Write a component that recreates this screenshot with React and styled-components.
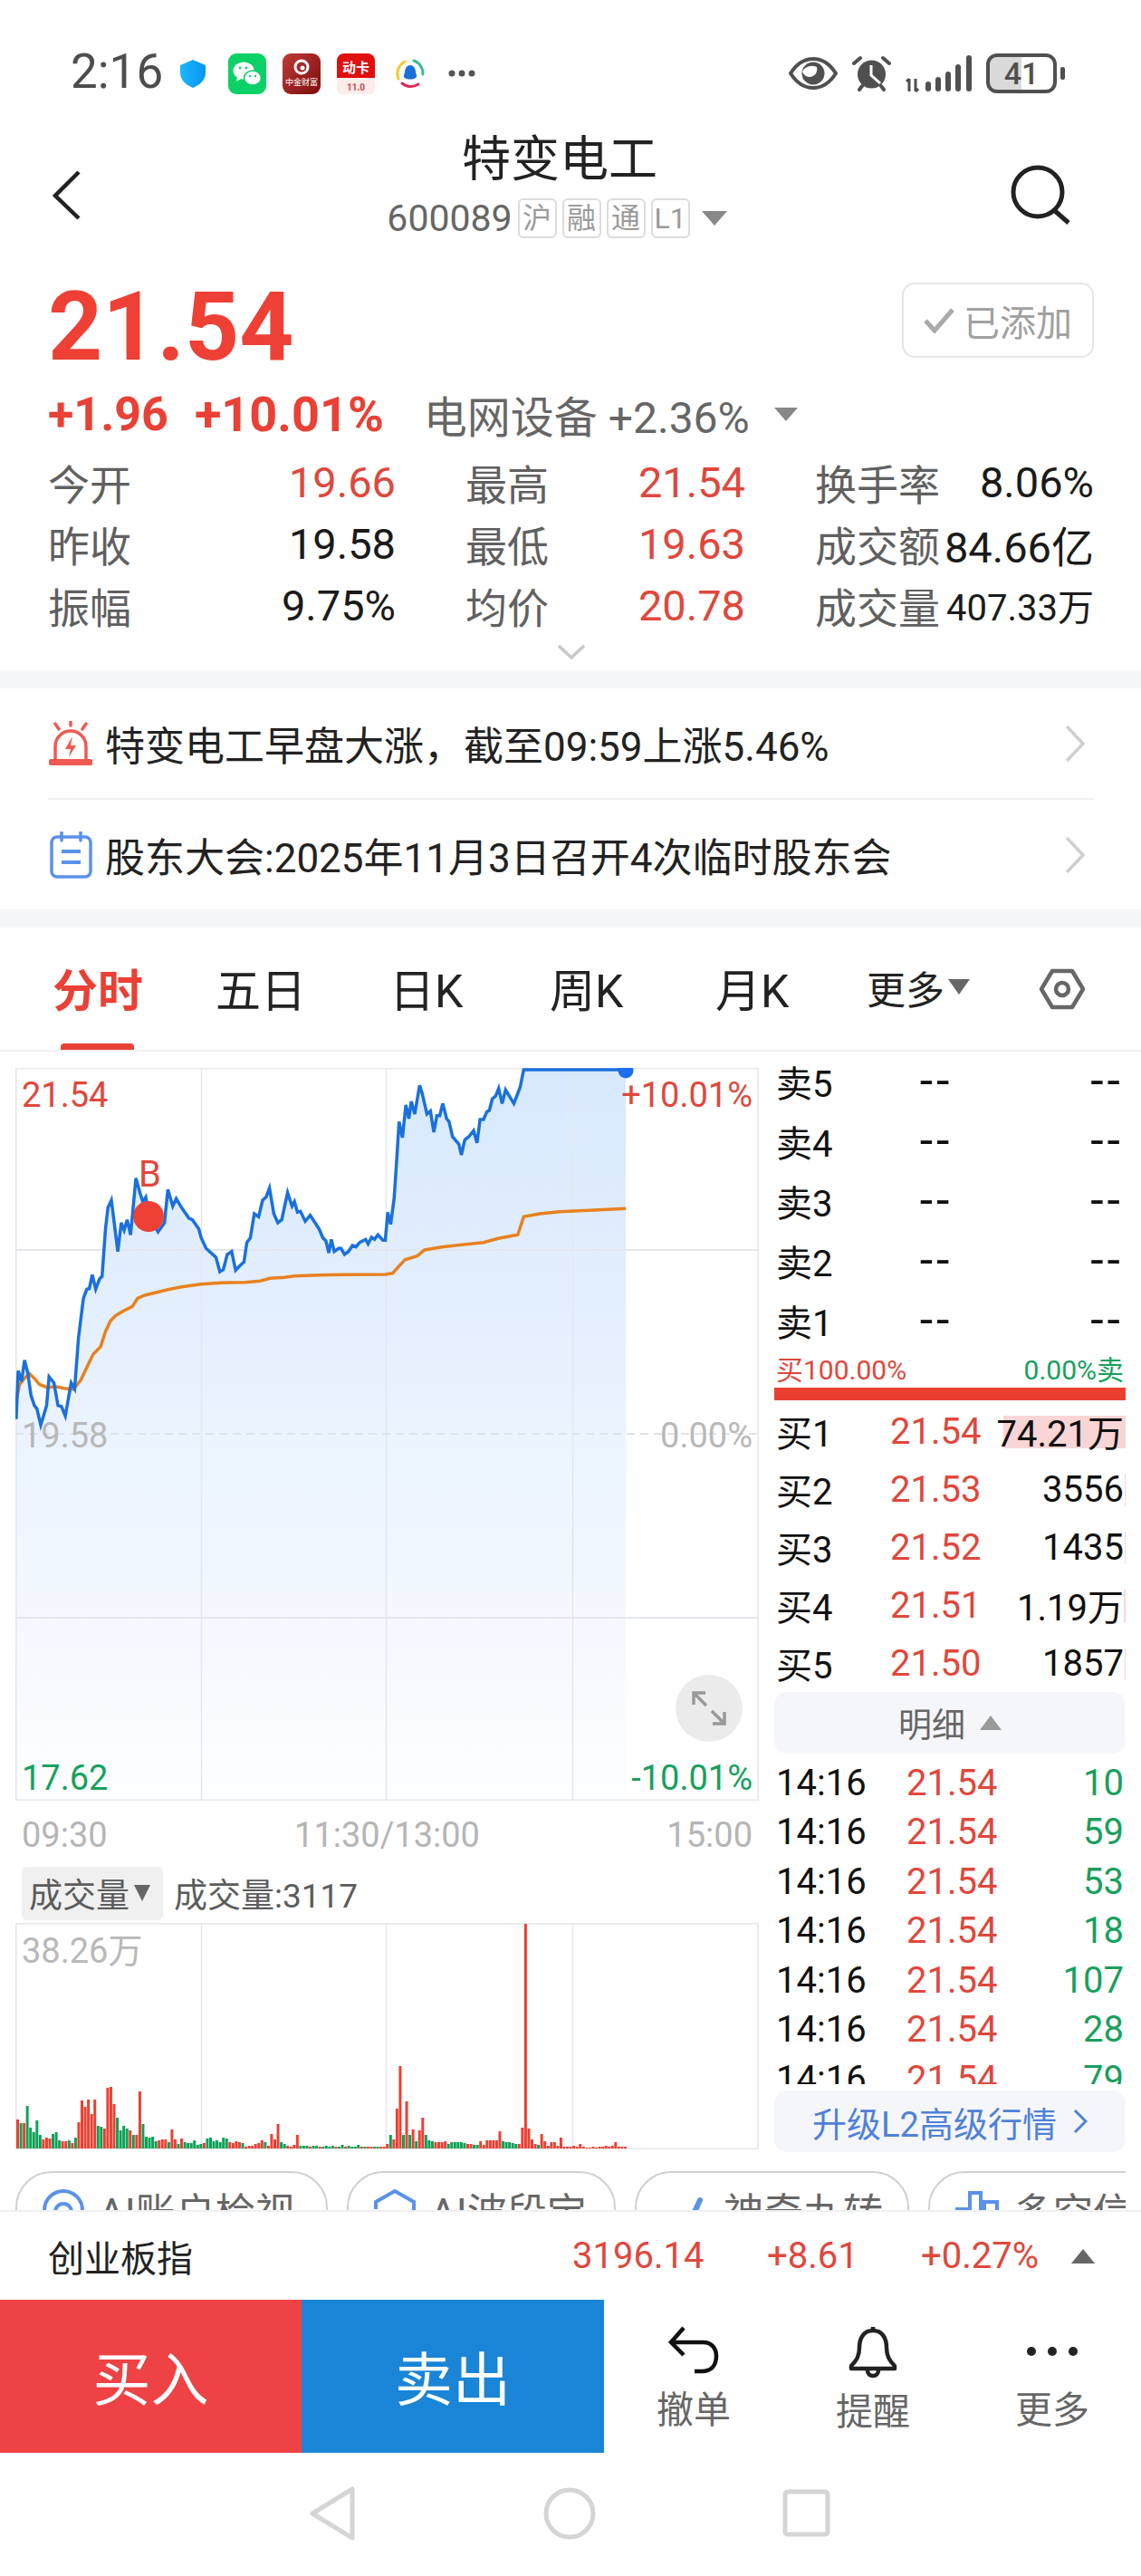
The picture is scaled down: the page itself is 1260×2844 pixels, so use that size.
import React from "react";
import styled, { createGlobalStyle } from "styled-components";

const RED = "#e0473c";
const GREEN = "#17a05d";
const FONT = 'Roboto, "Noto Sans CJK SC", sans-serif';

const GlobalStyle = createGlobalStyle`
  html, body {
    margin: 0;
    padding: 0;
    background: #fff;
  }
  body {
    font-family: ${FONT};
    color: #111;
  }
  * { box-sizing: border-box; }
`;

const Page = styled.div`
  width: 1260px;
  height: 2844px;
  overflow: hidden;
  background: #fff;
`;

/* status bar */
const StatusBar = styled.div`
  height: 130px;
  padding: 56px 84px 0 78px;
  display: flex;
  justify-content: space-between;
  align-items: flex-start;
`;
const StatusGroup = styled.div`
  display: flex;
  align-items: center;
  height: 50px;
`;
const Clock = styled.span`
  font-size: 53px;
  line-height: 46px;
  color: #4d4d4d;
  width: 121px;
  padding-bottom: 4px;
`;
const AppIcon = styled.svg`
  display: block;
  flex: none;
  margin-right: ${(p) => p.$gap || 0}px;
`;

/* title */
const Header = styled.div`
  height: 170px;
  padding: 0 78px 0 58px;
  display: grid;
  grid-template-columns: 60px 1fr 66px;
  align-items: center;
`;
const TitleBox = styled.div`
  display: flex;
  flex-direction: column;
  align-items: center;
  padding: 0 0 20px 2px;
`;
const Title = styled.div`
  font-size: 54px;
  line-height: 60px;
  color: #222;
`;
const SubLine = styled.div`
  display: flex;
  align-items: center;
  height: 44px;
  margin-top: 12px;
  padding-right: 6px;
  color: #666;
  font-size: 41px;
`;
const Tag = styled.span`
  width: 43px;
  height: 44px;
  margin-left: 6px;
  border: 2px solid #dcdcdc;
  border-radius: 6px;
  color: #9a9a9a;
  font-size: 32px;
  line-height: 40px;
  text-align: center;
`;
const Tri = styled.span`
  display: inline-block;
  flex: none;
  width: 0;
  height: 0;
  margin-left: ${(p) => p.$ml || 0}px;
  border-left: ${(p) => p.$w / 2}px solid transparent;
  border-right: ${(p) => p.$w / 2}px solid transparent;
  ${(p) => (p.$up ? "border-bottom" : "border-top")}: ${(p) => p.$h}px solid ${(p) => p.$c || "#888"};
`;

/* quote */
const Quote = styled.div`
  height: 440px;
  padding: 0 52px 0 53px;
  display: flex;
  flex-direction: column;
`;
const PriceRow = styled.div`
  height: 110px;
  padding-top: 13px;
  display: flex;
  justify-content: space-between;
  align-items: center;
`;
const Price = styled.div`
  font-size: 105px;
  font-weight: 700;
  color: #ee4035;
  line-height: 100px;
`;
const AddedBtn = styled.div`
  width: 212px;
  height: 83px;
  margin-bottom: 16px;
  border: 2px solid #e6e6e6;
  border-radius: 14px;
  display: flex;
  align-items: center;
  justify-content: center;
  gap: 10px;
  font-size: 40px;
  color: #a0a0a0;
`;
const ChangeRow = styled.div`
  height: 88px;
  padding-top: 6px;
  display: flex;
  align-items: center;
`;
const Change = styled.span`
  font-size: ${(p) => p.$size || 52}px;
  font-weight: 700;
  color: #ea4035;
  margin-right: ${(p) => p.$mr}px;
`;
const Sector = styled.span`
  font-size: 48px;
  color: #666;
`;
const StatGrid = styled.div`
  display: grid;
  grid-template-columns: 384px 77px 309px 77px 308px;
  grid-auto-rows: 68px;
`;
const Stat = styled.div`
  grid-column: ${(p) => p.$col * 2 + 1};
  display: flex;
  justify-content: space-between;
  align-items: center;
`;
const StatLabel = styled.span`
  font-size: 46px;
  color: #606060;
  white-space: nowrap;
`;
const StatValue = styled.span`
  font-size: ${(p) => p.$size || 47}px;
  color: ${(p) => p.$color || "#1a1a1a"};
  white-space: nowrap;
`;
const MoreRow = styled.div`
  flex: 1;
  display: flex;
  justify-content: center;
  padding-top: 10px;
`;
const Band = styled.div`
  height: 20px;
  background: #f5f6f8;
`;

/* notices */
const Notices = styled.div`
  height: 244px;
  padding: 0 52px 0 53px;
  display: grid;
  grid-template-rows: 123px 121px;
`;
const Notice = styled.div`
  display: flex;
  align-items: center;
  font-size: 44px;
  color: #222;
  padding-right: 10px;
  border-bottom: ${(p) => (p.$line ? "2px solid #efefef" : "none")};
  span { flex: 1; margin-left: 13px; white-space: nowrap; }
`;
const NoticeIcon = styled.div`
  width: 50px;
  flex: none;
  display: flex;
  justify-content: center;
`;

/* tabs */
const Tabs = styled.div`
  height: 137px;
  position: relative;
  padding: 0 52px 0 58px;
  border-bottom: 2px solid #f0f0f0;
  display: flex;
  align-items: center;
`;
const Tab = styled.div`
  width: ${(p) => p.$w}px;
  flex: none;
  font-size: ${(p) => p.$size || 50}px;
  font-weight: ${(p) => (p.$active ? 700 : 400)};
  color: ${(p) => (p.$active ? "#ea4035" : "#222")};
  white-space: nowrap;
  display: flex;
  align-items: center;
  position: relative;
  height: 100%;
  padding-bottom: 4px;
`;
const TabMark = styled.div`
  position: absolute;
  left: 9px;
  bottom: 0;
  width: 81px;
  height: 7px;
  border-radius: 4px 4px 0 0;
  background: #ea4035;
`;

/* main area */
const Main = styled.div`
  display: grid;
  grid-template-columns: 855px 388px;
  height: 1219px;
`;
const Left = styled.div`
  padding: 18px 0 0 17px;
  width: 838px;
`;
const ChartBox = styled.div`
  position: relative;
  width: 821px;
  height: 809px;
`;
const VolBox = styled(ChartBox)`
  height: 250px;
`;
const ChartSvg = styled.svg`
  display: block;
`;
const ChartLabel = styled.span`
  position: absolute;
  font-size: ${(p) => p.$size || 38}px;
  line-height: 40px;
  color: ${(p) => p.$color};
  ${(p) => (p.$right ? "right: 7px;" : "left: 7px;")}
  top: ${(p) => p.$top}px;
  white-space: nowrap;
`;
const TradeMark = styled.span`
  position: absolute;
  left: 136px;
  top: 98px;
  font-size: 40px;
  line-height: 40px;
  color: ${RED};
`;
const ExpandBtn = styled.div`
  position: absolute;
  left: 729px;
  top: 670px;
  width: 74px;
  height: 74px;
  border-radius: 50%;
  background: #ebebeb;
  display: flex;
  align-items: center;
  justify-content: center;
`;
const Axis = styled.div`
  height: 73px;
  padding: 2px 7px 0 7px;
  display: flex;
  justify-content: space-between;
  align-items: center;
  font-size: 38px;
  color: #b5b5b5;
`;
const VolHead = styled.div`
  height: 62px;
  display: flex;
  align-items: flex-start;
  font-size: 37px;
  color: #5c5c5c;
`;
const VolPill = styled.div`
  width: 156px;
  height: 59px;
  margin: 0 12px 0 7px;
  background: #f0f0f0;
  border-radius: 6px;
  display: flex;
  align-items: center;
  padding: 0 0 2px 8px;
  gap: 5px;
`;
const VolText = styled.div`
  height: 57px;
  display: flex;
  align-items: center;
`;

/* order book */
const Book = styled.div`
  display: flex;
  flex-direction: column;
`;
const BookRow = styled.div`
  height: ${(p) => p.$h}px;
  position: relative;
  display: grid;
  grid-template-columns: ${(p) => p.$cols || "126px 102px 1fr"};
  align-items: center;
  padding: 0 2px;
  font-size: 40px;
  color: #111;
`;
const Dash = styled.span`
  font-size: 52px;
  line-height: 1;
  text-align: ${(p) => (p.$right ? "right" : "center")};
  letter-spacing: 4px;
`;
const Num = styled.span`
  color: ${(p) => p.$color || "#111"};
  text-align: ${(p) => (p.$right ? "right" : "left")};
  white-space: nowrap;
  position: relative;
  z-index: 1;
`;
const QtyBar = styled.i`
  position: absolute;
  right: 0;
  top: 15px;
  height: 36px;
  background: #f9d5d5;
`;
const RatioRow = styled.div`
  height: 41px;
  padding: 0 2px 4px;
  display: flex;
  justify-content: space-between;
  align-items: center;
  font-size: 30px;
`;
const RatioBar = styled.div`
  height: 14px;
  margin-bottom: 2px;
  background: #ea3f30;
`;
const SoftBtn = styled.div`
  height: ${(p) => p.$h}px;
  margin-top: ${(p) => p.$mt || 0}px;
  background: #f5f6fa;
  border-radius: 14px;
  display: flex;
  align-items: center;
  justify-content: center;
  gap: ${(p) => p.$gap}px;
  color: ${(p) => p.$color};
  font-size: ${(p) => p.$size}px;
`;
const Trades = styled.div`
  height: 360px;
  margin-top: 5px;
  overflow: hidden;
`;

/* shortcut pills */
const PillStrip = styled.div`
  height: 60px;
  width: 1243px;
  padding: 17px 0 0 17px;
  overflow: hidden;
  display: flex;
  gap: 21px;
`;
const Pill = styled.div`
  flex: none;
  width: ${(p) => p.$w}px;
  height: 86px;
  border: 2px solid #d0d0d0;
  border-radius: 40px;
  display: flex;
  align-items: center;
  padding-left: 28px;
  gap: 16px;
  font-size: 44px;
  color: #666;
  white-space: nowrap;
`;

/* footer */
const IndexRow = styled.div`
  height: 99px;
  border-top: 2px solid #eff0f2;
  padding: 0 51px 0 53px;
  display: grid;
  grid-template-columns: 579px 215px 170px 166px 1fr;
  align-items: center;
  font-size: 40px;
  color: ${RED};
`;
const IndexName = styled.span`
  font-size: 40px;
  color: #222;
`;
const Actions = styled.div`
  height: 169px;
  display: grid;
  grid-template-columns: 333px 334px 1fr;
`;
const TradeBtn = styled.div`
  background: ${(p) => p.$bg};
  color: #fff;
  font-size: 64px;
  display: flex;
  align-items: center;
  justify-content: center;
  padding-bottom: 3px;
`;
const ToolBar = styled.div`
  display: grid;
  grid-template-columns: repeat(3, 198px);
`;
const Tool = styled.div`
  display: flex;
  flex-direction: column;
  align-items: center;
  font-size: 41px;
  color: #666;
  padding-top: 29px;
  gap: 14px;
  span { line-height: 46px; }
  svg { display: block; }
`;
const NavBar = styled.div`
  height: 136px;
  display: flex;
  justify-content: center;
  align-items: center;
  padding-bottom: 2px;
`;

/* chart data, written in the coordinates I measured on the crop */
const sx = (x) => x / 1.845 - 17;
const sy = (y) => 1150 + y / 3 - 1179;
const pricePts = [
  [33,1250],[37,1090],[44,1125],[50,1055],[57,1100],[63,1170],[70,1205],[75,1215],[83,1270],[95,1205],[100,1110],[110,1130],[118,1205],[125,1208],[133,1240],[145,1130],[152,1150],[160,980],[170,850],[177,820],[182,818],[188,772],[195,820],[203,785],[208,778],[215,620],[220,550],[227,525],[240,695],[247,600],[253,625],[259,590],[266,640],[277,452],[285,500],[291,530],[297,515],[305,590],[315,610],[322,630],[335,600],[342,490],[352,545],[359,520],[370,550],[385,585],[392,590],[405,620],[410,650],[420,685],[440,715],[448,762],[455,755],[463,705],[472,695],[480,757],[490,740],[497,730],[503,665],[510,650],[518,570],[527,580],[535,525],[542,515],[549,485],[558,570],[566,600],[574,590],[586,500],[595,545],[600,530],[606,565],[612,562],[622,595],[632,575],[650,620],[658,650],[664,660],[670,700],[675,655],[681,695],[690,685],[695,685],[702,705],[710,695],[718,675],[725,680],[733,665],[745,655],[750,670],[757,648],[763,655],[770,640],[780,658],[785,658],[790,565],[796,605],[803,520],[808,400],[813,265],[820,318],[827,210],[833,255],[838,198],[845,240],[855,145],[860,170],[870,240],[877,230],[884,300],[890,245],[896,245],[902,205],[910,255],[915,265],[922,315],[935,340],[940,375],[947,325],[955,315],[965,295],[972,335],[978,258],[985,258],[992,232],[997,228],[1003,190],[1010,180],[1016,155],[1023,205],[1030,160],[1047,205],[1060,150],[1067,93],[1275,93],
];
const avgPts = [
  [33,1190],[40,1135],[50,1115],[60,1100],[70,1115],[80,1135],[95,1145],[115,1143],[130,1148],[150,1152],[165,1120],[178,1075],[190,1035],[205,1010],[215,960],[225,925],[235,908],[250,893],[270,877],[280,850],[295,840],[320,830],[340,822],[370,812],[410,803],[450,799],[500,797],[530,793],[550,784],[580,781],[600,776],[650,773],[700,772],[785,771],[800,767],[815,740],[825,722],[850,710],[865,690],[900,680],[950,671],[985,665],[1015,652],[1055,640],[1067,580],[1100,570],[1140,563],[1200,559],[1275,553],
];
const toLine = (pts) => pts.map(([x, y]) => `${sx(x).toFixed(1)},${sy(y).toFixed(1)}`).join(" ");

// volume bars in px, negative = green
const bars = [
  32,-28,28,-47,-23,-18,-31,-15,10,12,11,-16,-18,-9,8,8,-9,6,-12,29,53,46,54,38,54,-25,-24,22,67,68,49,-34,-20,-25,-22,20,-15,15,63,-27,-13,-12,-13,-8,9,10,10,-7,21,10,-5,11,-7,-6,-6,-9,-4,-5,6,-11,-12,-8,-9,-7,-12,-11,7,6,8,7,-6,2,3,3,5,6,9,-7,3,16,10,27,-7,-5,3,2,4,15,-3,-3,-3,2,-3,-3,2,-2,-3,-2,-3,2,-2,-4,2,-3,-2,-2,-4,2,-2,2,2,-2,-2,2,2,5,-15,10,44,91,-15,52,-15,21,-8,20,34,-15,-9,-8,7,7,7,8,-5,-7,-7,-7,-7,-6,5,5,-4,-4,8,4,9,9,9,9,19,-8,-7,-7,-6,-5,5,23,248,22,10,5,-4,16,8,3,7,7,3,12,2,2,2,3,2,5,2,1,1,2,1,2,2,3,2,3,7,2,2,2,
];
const volBarW = 3;
const volStep = 3.55;

const VLines = ({ h }) =>
  [0, 205, 409, 615, 820].map((x) => (
    <line key={x} x1={x + 0.5} x2={x + 0.5} y1="0" y2={h} stroke="#e3e7ee" strokeWidth="1.5" />
  ));

const sellRows = [5, 4, 3, 2, 1];
const buyRows = [
  ["买1", "21.54", "74.21万", 135],
  ["买2", "21.53", "3556", 1],
  ["买3", "21.52", "1435", 1],
  ["买4", "21.51", "1.19万", 2],
  ["买5", "21.50", "1857", 1],
];
const trades = ["10", "59", "53", "18", "107", "28", "79"];

const stats = [
  ["今开", "19.66", RED, "最高", "21.54", RED, "换手率", "8.06%", null],
  ["昨收", "19.58", null, "最低", "19.63", RED, "成交额", "84.66亿", null],
  ["振幅", "9.75%", null, "均价", "20.78", RED, "成交量", "407.33万", null],
];

const StatusIcons = () => (
  <StatusGroup>
    <Clock>2:16</Clock>
    <AppIcon $gap={25} width="28" height="31" viewBox="0 0 28 31">
      <defs>
        <linearGradient id="sh" x1="0" x2="1" y1="0" y2="0">
          <stop offset="0" stopColor="#19b8fb" />
          <stop offset="1" stopColor="#0a93f5" />
        </linearGradient>
      </defs>
      <path d="M14 0 L28 6 V14 C28 23 21 28 14 31 C7 28 0 23 0 14 V6 Z" fill="url(#sh)" />
    </AppIcon>
    <AppIcon $gap={18} width="42" height="45" viewBox="0 0 42 45">
      <rect width="42" height="45" rx="9" fill="#0bd167" />
      <ellipse cx="17" cy="19" rx="11.5" ry="9.5" fill="#fff" />
      <path d="M10 25 L9 31 L16 27 Z" fill="#fff" />
      <ellipse cx="27" cy="27" rx="9.5" ry="8" fill="#fff" stroke="#0bd167" strokeWidth="1.5" />
      <circle cx="13" cy="16" r="1.4" fill="#0bd167" />
      <circle cx="20" cy="16" r="1.4" fill="#0bd167" />
      <circle cx="24" cy="25" r="1.2" fill="#0bd167" />
      <circle cx="30" cy="25" r="1.2" fill="#0bd167" />
    </AppIcon>
    <AppIcon $gap={18} width="42" height="45" viewBox="0 0 42 45">
      <defs>
        <linearGradient id="cj" x1="0" x2="1" y1="0" y2="1">
          <stop offset="0" stopColor="#c03a36" />
          <stop offset="1" stopColor="#7c0d0f" />
        </linearGradient>
      </defs>
      <rect width="42" height="45" rx="9" fill="url(#cj)" />
      <circle cx="21" cy="15" r="7" fill="none" stroke="#fff" strokeWidth="3" />
      <circle cx="22" cy="16" r="2.5" fill="#fff" />
      <text x="21" y="35" fontSize="9" fill="#fff" textAnchor="middle" fontFamily={FONT}>中金财富</text>
    </AppIcon>
    <AppIcon $gap={23} width="42" height="45" viewBox="0 0 42 45">
      <path d="M8 0 H34 A8 8 0 0 1 42 8 V27 H0 V8 A8 8 0 0 1 8 0 Z" fill="#e10f0f" />
      <rect y="27" width="42" height="18" rx="6" fill="#fdecec" />
      <text x="21" y="21" fontSize="15" fontWeight="700" fill="#fff" textAnchor="middle" fontFamily={FONT}>动卡</text>
      <text x="21" y="41" fontSize="10" fontWeight="700" fill="#c84b4b" textAnchor="middle" fontFamily={FONT}>11.0</text>
    </AppIcon>
    <AppIcon $gap={26} width="32" height="33" viewBox="0 0 32 33">
      <path d="M10 3 A15 15 0 0 0 3 22" fill="none" stroke="#f3c92a" strokeWidth="3" strokeLinecap="round" />
      <path d="M20 2 A15 15 0 0 1 30 17" fill="none" stroke="#3dbb9c" strokeWidth="3" strokeLinecap="round" />
      <path d="M7 27 A15 15 0 0 0 25 28" fill="none" stroke="#e32b5b" strokeWidth="3" strokeLinecap="round" />
      <path d="M16 7 C20 7 22 11 22 15 C23 18 24 20 22 21 C19 23 13 23 10 21 C8 20 9 18 10 15 C10 11 12 7 16 7 Z" fill="#1a6fd8" />
    </AppIcon>
    <AppIcon width="30" height="8" viewBox="0 0 30 8">
      <circle cx="4" cy="4" r="3.5" fill="#555" />
      <circle cx="15" cy="4" r="3.5" fill="#555" />
      <circle cx="26" cy="4" r="3.5" fill="#555" />
    </AppIcon>
  </StatusGroup>
);

const SystemIcons = () => (
  <StatusGroup>
    <AppIcon $gap={16} width="54" height="36" viewBox="0 0 54 36">
      <path d="M2 18 C9 7 18 2 27 2 C36 2 45 7 52 18 C45 29 36 34 27 34 C18 34 9 29 2 18 Z" fill="none" stroke="#505050" strokeWidth="4" />
      <circle cx="27" cy="18" r="12.5" fill="#505050" />
      <path d="M15 16 A8 8 0 0 0 31 11 A12 12 0 0 0 15 16 Z" fill="#fff" />
    </AppIcon>
    <AppIcon $gap={16} width="43" height="41" viewBox="0 0 43 41">
      <circle cx="21.5" cy="21" r="15.5" fill="#505050" />
      <path d="M21 11 V22 L31 31" fill="none" stroke="#fff" strokeWidth="3" />
      <path d="M2 9 L9 3 M41 9 L34 3 M8 38 L11 34 M35 38 L32 34" stroke="#505050" strokeWidth="4" strokeLinecap="round" />
    </AppIcon>
    <AppIcon $gap={16} width="73" height="41" viewBox="0 0 73 41">
      <path d="M4 26 V40 M1 29 L4 26 M11 26 V40 M11 40 L14 37" stroke="#505050" strokeWidth="3" fill="none" />
      <g fill="#505050">
        <rect x="22" y="29" width="6" height="11" rx="3" />
        <rect x="33" y="24" width="6" height="16" rx="3" />
        <rect x="44" y="18" width="6" height="22" rx="3" />
        <rect x="55" y="10" width="6" height="30" rx="3" />
        <rect x="67" y="0" width="6" height="40" rx="3" />
      </g>
    </AppIcon>
    <BatteryIcon />
  </StatusGroup>
);

const BatteryBody = styled.div`
  width: 78px;
  height: 44px;
  border: 4px solid #505050;
  border-radius: 12px;
  position: relative;
  overflow: hidden;
  background: linear-gradient(to right, #dadada 50%, #fff 50%);
  font-size: 34px;
  font-weight: 500;
  line-height: 36px;
  text-align: center;
  color: #505050;
`;
const BatteryNub = styled.div`
  width: 5px;
  height: 14px;
  margin-left: 4px;
  border-radius: 2px;
  background: #505050;
`;
function BatteryIcon() {
  return (
    <>
      <BatteryBody>41</BatteryBody>
      <BatteryNub />
    </>
  );
}

const SirenIcon = () => (
  <svg width="50" height="50" viewBox="0 0 50 50">
    <path d="M25 0 V5 M8 3 L12 9 M42 3 L38 9" stroke="#ef5a50" strokeWidth="3.5" strokeLinecap="round" />
    <path d="M8 43 V28 A17 17 0 0 1 42 28 V43" fill="none" stroke="#ef5a50" strokeWidth="3.5" />
    <rect x="1" y="42" width="48" height="7" rx="2" fill="#ef5a50" />
    <path d="M27 17 L19 31 H25 L23 40 L31 27 H25 Z" fill="#ef5a50" />
  </svg>
);
const CalendarIcon = () => (
  <svg width="47" height="52" viewBox="0 0 47 52">
    <rect x="2" y="6" width="43" height="44" rx="6" fill="none" stroke="#5a91ea" strokeWidth="3.5" />
    <path d="M13 1 V10 M34 1 V10" stroke="#5a91ea" strokeWidth="3.5" strokeLinecap="round" />
    <path d="M13 22 H34 M13 34 H34" stroke="#5a91ea" strokeWidth="4" />
  </svg>
);
const ChevronRight = () => (
  <svg width="22" height="40" viewBox="0 0 22 40">
    <path d="M2 1 L20 20 L2 39" fill="none" stroke="#cfcfcf" strokeWidth="3.5" />
  </svg>
);

export default function App() {
  const fillPts = `${sx(33)},809 ${toLine(pricePts)} ${sx(1275)},809`;
  return (
    <Page>
      <GlobalStyle />
      <StatusBar>
        <StatusIcons />
        <SystemIcons />
      </StatusBar>

      <Header>
        <svg width="32" height="55" viewBox="0 0 32 55">
          <path d="M29 2 L3 28 L29 53" fill="none" stroke="#222" strokeWidth="4.5" />
        </svg>
        <TitleBox>
          <Title>特变电工</Title>
          <SubLine>
            600089
            <Tag>沪</Tag>
            <Tag>融</Tag>
            <Tag>通</Tag>
            <Tag>L1</Tag>
            <Tri $w={28} $h={16} $ml={13} />
          </SubLine>
        </TitleBox>
        <svg width="66" height="66" viewBox="0 0 66 66">
          <circle cx="30" cy="30" r="27" fill="none" stroke="#222" strokeWidth="5" />
          <path d="M48 50 L64 64" stroke="#222" strokeWidth="5" />
        </svg>
      </Header>

      <Quote>
        <PriceRow>
          <Price>21.54</Price>
          <AddedBtn>
            <svg width="34" height="28" viewBox="0 0 34 28">
              <path d="M2 14 L12 25 L32 2" fill="none" stroke="#aaa" strokeWidth="5" />
            </svg>
            已添加
          </AddedBtn>
        </PriceRow>
        <ChangeRow>
          <Change $mr={29}>+1.96</Change>
          <Change $mr={44} $size={54}>+10.01%</Change>
          <Sector>电网设备 +2.36%</Sector>
          <Tri $w={26} $h={15} $ml={27} />
        </ChangeRow>
        <StatGrid>
          {stats.map((r) => (
            <React.Fragment key={r[0]}>
              <Stat $col={0}>
                <StatLabel>{r[0]}</StatLabel>
                <StatValue $color={r[2]}>{r[1]}</StatValue>
              </Stat>
              <Stat $col={1}>
                <StatLabel>{r[3]}</StatLabel>
                <StatValue $color={r[5]}>{r[4]}</StatValue>
              </Stat>
              <Stat $col={2}>
                <StatLabel>{r[6]}</StatLabel>
                <StatValue $size={r[7].length > 6 ? 40 : 47}>{r[7]}</StatValue>
              </Stat>
            </React.Fragment>
          ))}
        </StatGrid>
        <MoreRow>
          <svg width="32" height="16" viewBox="0 0 32 16">
            <path d="M2 1 L16 14 L30 1" fill="none" stroke="#c8c8c8" strokeWidth="3.5" />
          </svg>
        </MoreRow>
      </Quote>
      <Band />

      <Notices>
        <Notice $line>
          <NoticeIcon><SirenIcon /></NoticeIcon>
          <span>特变电工早盘大涨，截至09:59上涨5.46%</span>
          <ChevronRight />
        </Notice>
        <Notice>
          <NoticeIcon><CalendarIcon /></NoticeIcon>
          <span>股东大会:2025年11月3日召开4次临时股东会</span>
          <ChevronRight />
        </Notice>
      </Notices>
      <Band />

      <Tabs>
        <Tab $w={180} $active>
          分时
          <TabMark />
        </Tab>
        <Tab $w={192}>五日</Tab>
        <Tab $w={177}>日K</Tab>
        <Tab $w={183}>周K</Tab>
        <Tab $w={167}>月K</Tab>
        <Tab $w={190} $size={43}>
          更多
          <Tri $w={24} $h={17} $ml={4} $c="#666" />
        </Tab>
        <svg width="52" height="46" viewBox="0 0 52 46">
          <path d="M15 3 H37 L49 23 L37 43 H15 L3 23 Z" fill="none" stroke="#666" strokeWidth="4.5" strokeLinejoin="round" />
          <circle cx="26" cy="23" r="7" fill="none" stroke="#666" strokeWidth="4.5" />
        </svg>
      </Tabs>

      <Main>
        <Left>
          <ChartBox>
            <ChartSvg width="821" height="809" viewBox="0 0 821 809">
              <defs>
                <linearGradient id="area" x1="0" x2="0" y1="0" y2="1">
                  <stop offset="0" stopColor="#d8e8fd" />
                  <stop offset="1" stopColor="#fdfeff" />
                </linearGradient>
              </defs>
              <polygon points={fillPts} fill="url(#area)" />
              <rect x="0.75" y="0.75" width="819.5" height="807.5" fill="none" stroke="#e8e9ed" strokeWidth="1.5" />
              <VLines h={809} />
              <line x1="0" x2="821" y1="201" y2="201" stroke="#e3e6ec" strokeWidth="2" />
              <line x1="0" x2="821" y1="404" y2="404" stroke="#dfe2e8" strokeWidth="2" strokeDasharray="9 6" />
              <line x1="0" x2="821" y1="607" y2="607" stroke="#e3e6ec" strokeWidth="2" />
              <polyline points={toLine(avgPts)} fill="none" stroke="#e8811f" strokeWidth="3.5" />
              <polyline points={toLine(pricePts)} fill="none" stroke="#1a70dc" strokeWidth="3.5" />
              <circle cx="147" cy="164" r="17" fill="#ee4035" />
              <circle cx="674" cy="3" r="8.5" fill="#1a70f0" />
            </ChartSvg>
            <ChartLabel $color={RED} $top={10}>21.54</ChartLabel>
            <ChartLabel $color={RED} $top={10} $right>+10.01%</ChartLabel>
            <TradeMark>B</TradeMark>
            <ChartLabel $color="#b8b8b8" $top={386}>19.58</ChartLabel>
            <ChartLabel $color="#b8b8b8" $top={386} $right>0.00%</ChartLabel>
            <ChartLabel $color={GREEN} $top={764}>17.62</ChartLabel>
            <ChartLabel $color={GREEN} $top={764} $right>-10.01%</ChartLabel>
            <ExpandBtn>
              <svg width="40" height="40" viewBox="0 0 40 40">
                <path d="M3 16 V3 H16 M3 3 L17 17 M37 24 V37 H24 M37 37 L23 23" fill="none" stroke="#999" strokeWidth="3.5" />
              </svg>
            </ExpandBtn>
          </ChartBox>
          <Axis>
            <span>09:30</span>
            <span>11:30/13:00</span>
            <span>15:00</span>
          </Axis>
          <VolHead>
            <VolPill>
              成交量
              <Tri $w={18} $h={18} $c="#666" />
            </VolPill>
            <VolText>成交量:3117</VolText>
          </VolHead>
          <VolBox>
            <ChartSvg width="821" height="250" viewBox="0 0 821 250">
              <rect x="0.75" y="0.75" width="819.5" height="248.5" fill="none" stroke="#e8e8e8" strokeWidth="1.5" />
              <VLines h={250} />
              {bars.map((v, i) => (
                <rect
                  key={i}
                  x={1 + i * volStep}
                  y={249 - Math.abs(v)}
                  width={volBarW}
                  height={Math.abs(v)}
                  fill={v > 0 ? "#ec4033" : "#0fa158"}
                />
              ))}
            </ChartSvg>
            <ChartLabel $color="#b8b8b8" $top={11}>38.26万</ChartLabel>
          </VolBox>
        </Left>

        <Book>
          {sellRows.map((n) => (
            <BookRow key={n} $h={66}>
              <span>卖{n}</span>
              <Dash>--</Dash>
              <Dash $right>--</Dash>
            </BookRow>
          ))}
          <RatioRow>
            <Num $color={RED}>买100.00%</Num>
            <Num $color={GREEN}>0.00%卖</Num>
          </RatioRow>
          <RatioBar />
          {buyRows.map(([label, price, qty, w]) => (
            <BookRow key={label} $h={64}>
              <span>{label}</span>
              <Num $color={RED}>{price}</Num>
              <Num $right>{qty}</Num>
              <QtyBar style={{ width: w }} />
            </BookRow>
          ))}
          <SoftBtn $h={68} $gap={16} $color="#666" $size={37}>
            明细
            <Tri $up $w={25} $h={16} $c="#999" />
          </SoftBtn>
          <Trades>
            {trades.map((v, i) => (
              <BookRow key={i} $h={54.5} $cols="144px 102px 1fr">
                <span>14:16</span>
                <Num $color={RED}>21.54</Num>
                <Num $right $color={GREEN}>{v}</Num>
              </BookRow>
            ))}
          </Trades>
          <SoftBtn $h={68} $mt={7} $gap={18} $color="#4f81d8" $size={38}>
            升级L2高级行情
            <svg width="16" height="28" viewBox="0 0 16 28">
              <path d="M2 2 L14 14 L2 26" fill="none" stroke="#4f81d8" strokeWidth="3" />
            </svg>
          </SoftBtn>
        </Book>
      </Main>

      <PillStrip>
        <Pill $w={345}>
          <svg width="46" height="46" viewBox="0 0 46 46">
            <circle cx="23" cy="23" r="21" fill="none" stroke="#5a91ea" strokeWidth="4" />
            <circle cx="23" cy="25" r="9" fill="none" stroke="#5a91ea" strokeWidth="4" />
          </svg>
          AI账户检视
        </Pill>
        <Pill $w={297}>
          <svg width="46" height="46" viewBox="0 0 46 46">
            <path d="M2 22 V14 L23 2 L44 14 V22 M44 30 V44 H2 V30" fill="none" stroke="#5a91ea" strokeWidth="4" />
            <circle cx="44" cy="25" r="3.5" fill="#5a91ea" />
            <path d="M23 24 V44" stroke="#5a91ea" strokeWidth="4" />
          </svg>
          AI波段宝
        </Pill>
        <Pill $w={303}>
          <svg width="52" height="46" viewBox="0 0 52 46">
            <path d="M6 42 L14 26 M28 42 L42 12" fill="none" stroke="#5a91ea" strokeWidth="6" strokeLinecap="round" />
          </svg>
          神奇九转
        </Pill>
        <Pill $w={303}>
          <svg width="48" height="46" viewBox="0 0 48 46">
            <path d="M2 44 V22 H14 V44 M16 44 V4 H28 V44 M32 44 V14 H46 V44" fill="none" stroke="#5a91ea" strokeWidth="4" />
          </svg>
          多空信号
        </Pill>
      </PillStrip>

      <IndexRow>
        <IndexName>创业板指</IndexName>
        <span>3196.14</span>
        <span>+8.61</span>
        <span>+0.27%</span>
        <Tri $up $w={26} $h={16} $c="#666" />
      </IndexRow>
      <Actions>
        <TradeBtn $bg="#ee4244">买入</TradeBtn>
        <TradeBtn $bg="#1a85d6">卖出</TradeBtn>
        <ToolBar>
          <Tool>
            <svg width="58" height="56" viewBox="0 0 58 56">
              <path d="M18 2 L4 18 L18 32 M5 18 H40 C48 18 54 24 54 33 C54 44 48 50 38 50 H30" fill="none" stroke="#111" strokeWidth="4.5" />
            </svg>
            <span>撤单</span>
          </Tool>
          <Tool>
            <svg width="56" height="58" viewBox="0 0 56 58">
              <path d="M28 5 C18 5 13 13 13 24 C13 33 10 38 4 44 V47 H52 V44 C46 38 43 33 43 24 C43 13 38 5 28 5 Z" fill="none" stroke="#222" strokeWidth="4.5" strokeLinejoin="round" />
              <path d="M28 1 V5 M22 49 C22 57 34 57 34 49" fill="none" stroke="#222" strokeWidth="4.5" />
            </svg>
            <span>提醒</span>
          </Tool>
          <Tool>
            <svg width="60" height="56" viewBox="0 0 60 56">
              <circle cx="7" cy="28" r="5" fill="#222" />
              <circle cx="30" cy="28" r="5" fill="#222" />
              <circle cx="53" cy="28" r="5" fill="#222" />
            </svg>
            <span>更多</span>
          </Tool>
        </ToolBar>
      </Actions>
      <NavBar>
        <svg width="576" height="60" viewBox="0 0 576 60">
          <path d="M47 3 V57 L3 30 Z" fill="none" stroke="#d5d5d5" strokeWidth="5" strokeLinejoin="round" />
          <circle cx="287" cy="30" r="26" fill="none" stroke="#d5d5d5" strokeWidth="5" />
          <rect x="525" y="6" width="47" height="47" rx="3" fill="none" stroke="#d5d5d5" strokeWidth="5" />
        </svg>
      </NavBar>
    </Page>
  );
}
